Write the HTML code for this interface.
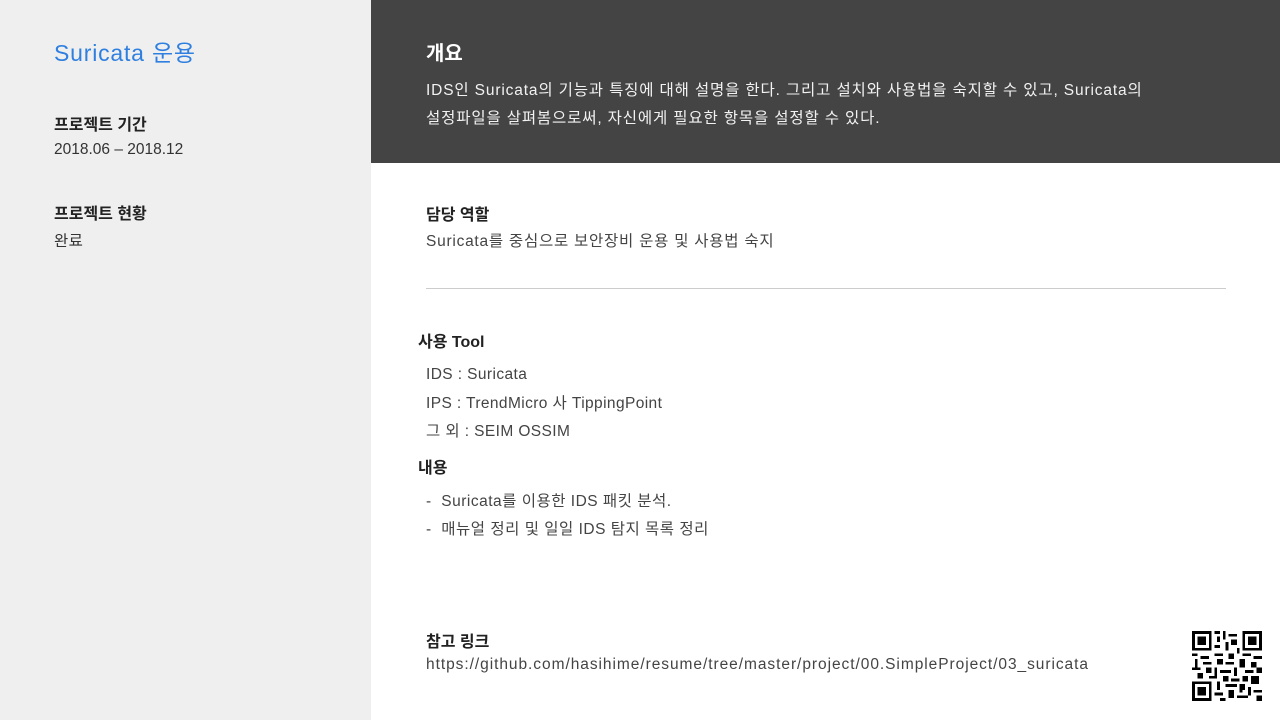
<!DOCTYPE html>
<html><head><meta charset="utf-8"><style>
*{margin:0;padding:0;box-sizing:border-box}
body{width:1280px;height:720px;position:relative;overflow:hidden;background:#fff;font-family:"Liberation Sans","Noto Sans CJK KR",sans-serif;color:#333}
.side{position:absolute;left:0;top:0;width:371px;height:720px;background:#efefef}
.t{position:absolute;white-space:nowrap}
.hdr{position:absolute;left:371px;top:0;width:909px;height:163px;background:#444}
.b{font-weight:bold;color:#222;font-size:16px}
.n{font-size:15.5px;color:#444;letter-spacing:0.4px}
</style></head><body>
<div class="side"></div>
<div class="t" style="left:54px;top:34px;font-size:23px;color:#2f7fe0;letter-spacing:0.8px">Suricata 운용</div>
<div class="t b" style="left:54px;top:111px">프로젝트 기간</div>
<div class="t n" style="left:54px;top:141px;color:#333;letter-spacing:0">2018.06 – 2018.12</div>
<div class="t b" style="left:54px;top:200px">프로젝트 현황</div>
<div class="t n" style="left:54px;top:229px;color:#333">완료</div>
<div class="hdr"></div>
<div class="t" style="left:426px;top:37px;font-size:20px;font-weight:bold;color:#fff">개요</div>
<div class="t" style="left:426px;top:77px;font-size:15.5px;color:#f2f2f2;line-height:28px;letter-spacing:0.85px">IDS인 Suricata의 기능과 특징에 대해 설명을 한다. 그리고 설치와 사용법을 숙지할 수 있고, Suricata의<br>설정파일을 살펴봄으로써, 자신에게 필요한 항목을 설정할 수 있다.</div>
<div class="t b" style="left:426px;top:201px">담당 역할</div>
<div class="t n" style="left:426px;top:229px;letter-spacing:0.75px">Suricata를 중심으로 보안장비 운용 및 사용법 숙지</div>
<div style="position:absolute;left:426px;top:288px;width:800px;height:1px;background:#ccc"></div>
<div class="t b" style="left:418px;top:328px">사용 Tool</div>
<div class="t n" style="left:426px;top:361px;line-height:28.5px">IDS : Suricata<br>IPS : TrendMicro 사 TippingPoint<br>그 외 : SEIM OSSIM</div>
<div class="t b" style="left:418px;top:454px">내용</div>
<div class="t n" style="left:426px;top:488px;line-height:28px;letter-spacing:0.5px">-&nbsp;&nbsp;Suricata를 이용한 IDS 패킷 분석.<br>-&nbsp;&nbsp;매뉴얼 정리 및 일일 IDS 탐지 목록 정리</div>
<div class="t b" style="left:426px;top:628px">참고 링크</div>
<div class="t n" style="left:426px;top:656px;letter-spacing:0.95px">https://github.com/hasihime/resume/tree/master/project/00.SimpleProject/03_suricata</div>
<svg style="position:absolute;left:1192px;top:631px" width="70" height="70" viewBox="0 0 25 25" shape-rendering="crispEdges">
<g fill="#000">
<path d="M0 0h7v7h-7zM1 1v5h5v-5zM2 2h3v3h-3z" fill-rule="evenodd"/>
<path d="M18 0h7v7h-7zM19 1v5h5v-5zM20 2h3v3h-3z" fill-rule="evenodd"/>
<path d="M0 18h7v7h-7zM1 19v5h5v-5zM2 20h3v3h-3z" fill-rule="evenodd"/>
<path d="M8 0h2v1h-2zM11 0h1v3h-1zM13 1h3v1h-3zM9 2h1v2h-1zM14 3h2v2h-2zM12 4h1v3h-1zM8 5h2v1h-2zM16 6h1v2h-1zM8 8h3v1h-3zM0 8h2v1h-2zM3 9h3v1h-3zM13 8h2v2h-2zM18 8h3v1h-3zM22 9h3v1h-3zM1 10h1v3h-1zM4 11h3v1h-3zM9 10h2v2h-2zM12 11h3v1h-3zM17 10h2v3h-2zM21 11h2v2h-2zM0 13h3v1h-3zM5 13h2v2h-2zM8 13h1v3h-1zM10 14h4v1h-4zM15 13h1v3h-1zM19 14h3v1h-3zM23 13h2v2h-2zM2 15h2v2h-2zM6 16h3v1h-3zM11 16h2v2h-2zM14 17h3v1h-3zM18 16h2v2h-2zM21 16h3v3h-3zM9 18h1v3h-1zM12 19h4v1h-4zM17 19h2v2h-2zM20 20h1v3h-1zM22 21h3v1h-3zM8 22h3v1h-3zM13 21h2v3h-2zM16 23h4v1h-4zM23 23h2v2h-2zM10 24h2v1h-2zM17 21h1v1h-1z"/>
</g></svg>
</body></html>
